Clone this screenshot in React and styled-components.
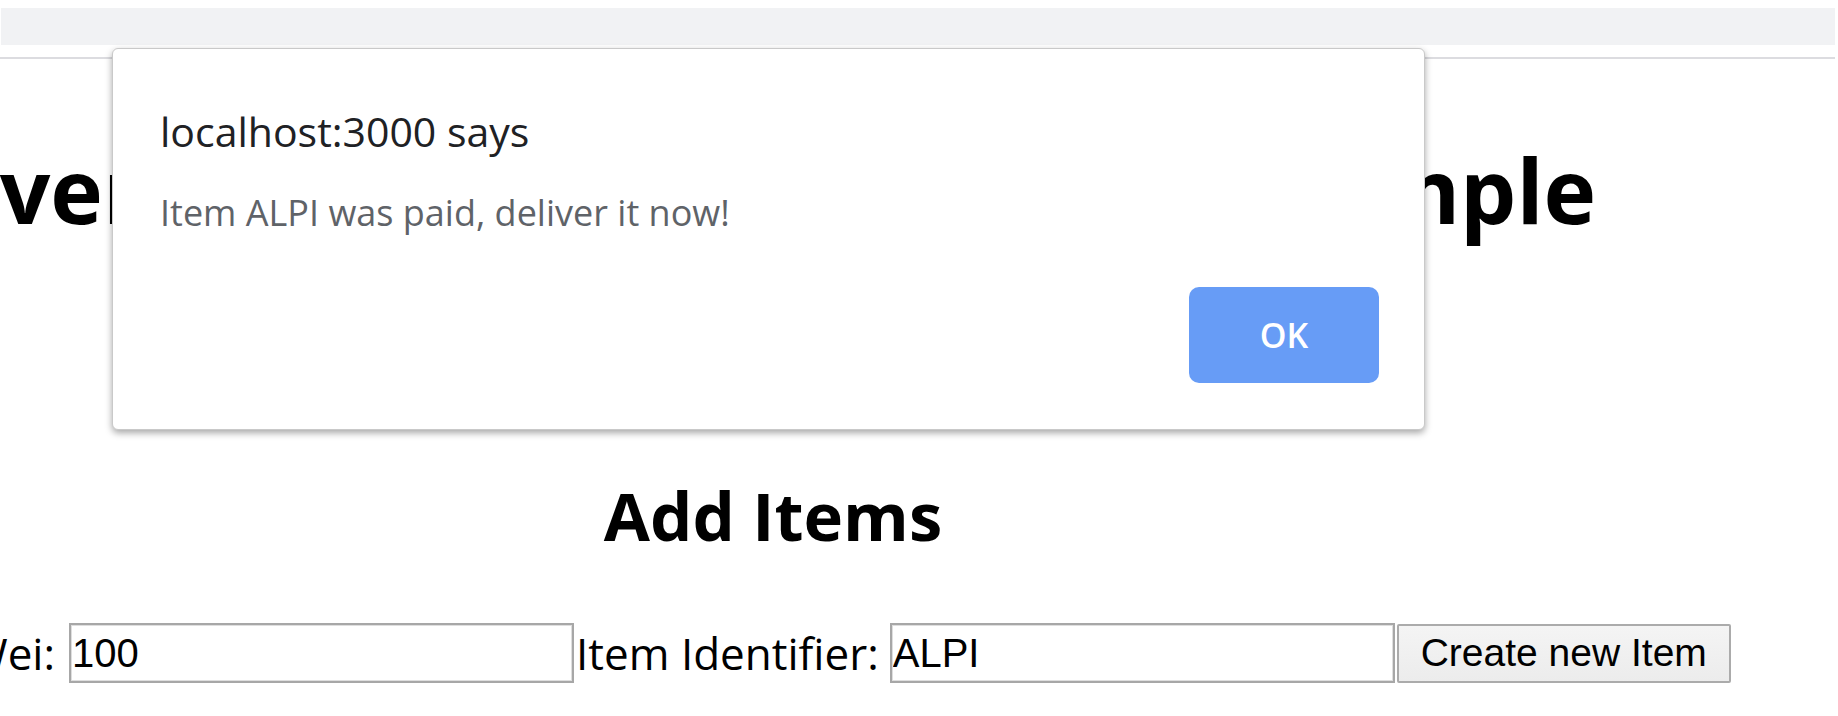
import React from "react";
import styled, { createGlobalStyle } from "styled-components";

const GlobalStyle = createGlobalStyle`
  html, body {
    margin: 0;
    padding: 0;
    background: #ffffff;
    overflow: hidden;
  }
  body {
    width: 1838px;
    height: 716px;
    font-family: "Open Sans", "Noto Sans", sans-serif;
    color: #000;
  }
`;

const Screen = styled.div`
  position: relative;
  width: 1838px;
  height: 716px;
  overflow: hidden;
`;

const Chrome = styled.div`
  padding-top: 8px;
  display: flex;
  flex-direction: column;
`;

const ToolBar = styled.div`
  flex: none;
  height: 37px;
  margin: 0 3px 0 1px;
  background: #f1f2f4;
`;

const Divider = styled.div`
  flex: none;
  margin: 12px 3px 0 0;
  height: 2px;
  background: #dcdce0;
`;

const Page = styled.main`
  width: 1546px;
  display: flex;
  flex-direction: column;
  align-items: stretch;
`;

const Line = styled.div`
  display: flex;
  justify-content: center;
  white-space: nowrap;
`;

const Title = styled.h1`
  margin: ${(p) => p.$top}px 0 0;
  font-family: "Open Sans", "Noto Sans", sans-serif;
  font-weight: 700;
  font-size: ${(p) => p.$size}px;
  line-height: ${(p) => p.$lh}px;
  white-space: nowrap;
  flex: none;
`;

const Form = styled.div`
  margin-top: 63px;
  display: flex;
  justify-content: center;
  align-items: center;
  white-space: nowrap;
`;

const Label = styled.span`
  flex: none;
  font-family: "Open Sans", "Noto Sans", sans-serif;
  font-size: 44px;
  line-height: 60px;
  margin: 0 ${(p) => p.$after}px 0 ${(p) => p.$before}px;
`;

const TextInput = styled.input`
  flex: none;
  box-sizing: border-box;
  width: 505px;
  height: 60px;
  margin: 0;
  padding: 0 0 0 1px;
  border: 2px solid #a7a7a7;
  box-shadow: inset 0 0 0 1px #dedede;
  background: #fff;
  font-family: "Liberation Sans", Arial, sans-serif;
  font-size: 40px;
  color: #000;
  outline: none;
`;

const PlainButton = styled.button`
  flex: none;
  box-sizing: border-box;
  width: 334px;
  height: 59px;
  margin: 0 0 0 2px;
  padding: 0;
  border: 2px solid #ababab;
  border-radius: 2px;
  background: linear-gradient(#f4f4f4, #ececec);
  font-family: "Liberation Sans", Arial, sans-serif;
  font-size: 39px;
  color: #000;
`;

const Dialog = styled.div`
  position: absolute;
  left: 112px;
  top: 48px;
  width: 1313px;
  height: 382px;
  box-sizing: border-box;
  background: #fff;
  border: 1px solid #c9c9c9;
  border-radius: 6px;
  box-shadow: 0 3px 7px rgba(0, 0, 0, 0.35);
  padding: 54px 45px 46px 47px;
  display: flex;
  flex-direction: column;
`;

const DialogTitle = styled.div`
  font-family: "Open Sans", "Noto Sans", sans-serif;
  font-size: 41px;
  line-height: 56px;
  color: #202124;
`;

const DialogMessage = styled.div`
  margin-top: 29px;
  font-family: "Open Sans", "Noto Sans", sans-serif;
  font-size: 36px;
  line-height: 50px;
  color: #5f6368;
`;

const DialogActions = styled.div`
  margin-top: auto;
  display: flex;
  justify-content: flex-end;
`;

const OkButton = styled.button`
  width: 190px;
  height: 96px;
  border: none;
  border-radius: 10px;
  background: #679cf6;
  color: #fff;
  font-family: "Open Sans", "Noto Sans", sans-serif;
  font-weight: 600;
  font-size: 34px;
  padding: 0;
`;

export default function App() {
  return (
    <>
      <GlobalStyle />
      <Screen>
        <Chrome>
          <ToolBar />
          <Divider />
        </Chrome>
        <Page>
          <Line>
            <Title $top={71} $size={89} $lh={120}>
              Event Trigger / Supply Chain Example
            </Title>
          </Line>
          <Line>
            <Title as="h2" $top={220} $size={67} $lh={90}>
              Add Items
            </Title>
          </Line>
          <Form>
            <Label $before={0} $after={14}>Cost in Wei:</Label>
            <TextInput type="text" defaultValue="100" />
            <Label $before={2} $after={11}>Item Identifier:</Label>
            <TextInput type="text" defaultValue="ALPI" />
            <PlainButton type="button">Create new Item</PlainButton>
          </Form>
        </Page>
        <Dialog role="alertdialog">
          <DialogTitle>localhost:3000 says</DialogTitle>
          <DialogMessage>Item ALPI was paid, deliver it now!</DialogMessage>
          <DialogActions>
            <OkButton type="button">OK</OkButton>
          </DialogActions>
        </Dialog>
      </Screen>
    </>
  );
}
